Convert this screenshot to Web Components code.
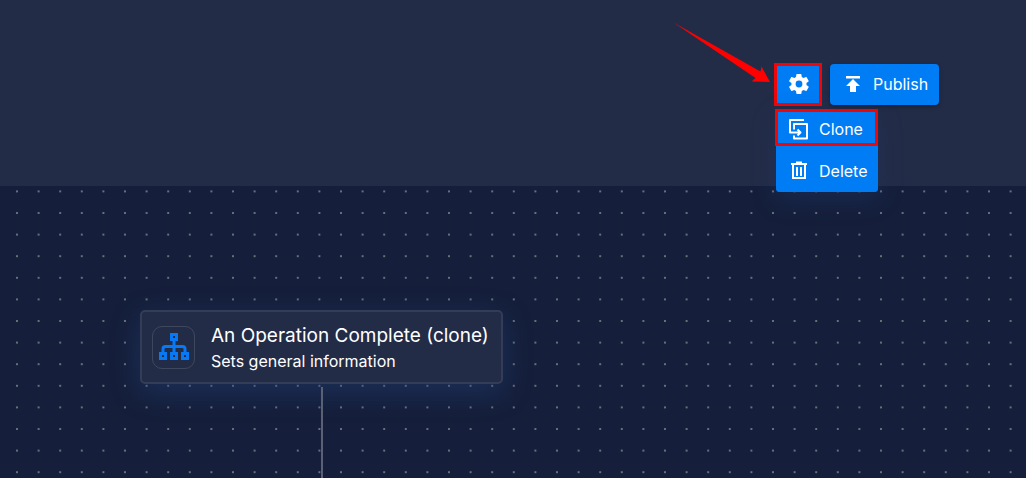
<!DOCTYPE html>
<html lang="en">
<head>
<meta charset="utf-8">
<title>Flow editor</title>
<style>
html, body { height: 100%; }
body { margin: 0; background: #151f3b; color: #fff; font-family: Inter, "Noto Sans", sans-serif; font-size: 16px; }
flow-editor { height: 100%; }
</style>
</head>
<body>
<flow-editor></flow-editor>

<template id="flow-editor-t">
<style>
:host { display: flex; flex-direction: column; min-height: 100%; overflow: hidden; }
header { display: flex; justify-content: flex-end; align-items: flex-start; gap: 8px; box-sizing: border-box; min-height: 186px; padding: 64px 87px 0 16px; background: #232c47; position: relative; z-index: 1; }
main { flex: 1; display: flex; }
flow-canvas { flex: 1; }
</style>
<header>
<settings-menu>
<action-button slot="items" name="Clone" kind="item" marked><app-icon name="clone"></app-icon></action-button>
<action-button slot="items" name="Delete" kind="item"><app-icon name="delete"></app-icon></action-button>
</settings-menu>
<action-button name="Publish" kind="main"><app-icon name="publish"></app-icon></action-button>
</header>
<main>
<flow-canvas>
<flow-node>
<app-icon slot="icon" name="tree"></app-icon>
<span slot="title">An Operation Complete (clone)</span>
<span slot="text">Sets general information</span>
</flow-node>
</flow-canvas>
</main>
</template>

<template id="settings-menu-t">
<style>
:host { display: block; position: relative; }
.menu { position: absolute; top: 45px; left: 0; width: 102px; display: flex; flex-direction: column; gap: 1px; border-radius: 4px; background: #007cf5; box-shadow: 0 8px 24px #1d3d7855; }
.arrow { position: absolute; right: 52px; top: -44px; width: 100px; height: 64px; pointer-events: none; }
</style>
<action-button label="Settings" kind="square" marked><app-icon name="gear"></app-icon></action-button>
<div class="menu"><slot name="items"></slot></div>
<svg class="arrow" viewBox="0 0 100 64" aria-hidden="true"><path fill="#f00" d="M3.5 2.5 90.5 51.5 91.5 46.5 100 62 81.5 61.5 85.5 58Z"/></svg>
</template>

<template id="action-button-t">
<style>
:host { display: block; position: relative; }
button { display: flex; align-items: center; gap: 9px; box-sizing: border-box; width: 100%; height: 41px; margin: 0; padding: 0 12px 2px; border: 0; border-radius: 4px; background: #007cf5; color: #fff; font: inherit; white-space: nowrap; cursor: pointer; }
:host([kind="main"]) button { width: 109px; box-shadow: 0 2px 4px #0004; }
:host([kind="square"]) button { width: 46px; padding: 0 11px 2px; }
button:hover { background: #0a86ff; }
:host([marked])::after { content: ""; position: absolute; inset: -1px 0 -1px -2px; border: 3px solid #f00606; pointer-events: none; }
:host([marked][kind="item"])::after { inset: 0 0 4px -1px; }
</style>
<button type="button"><slot></slot></button>
</template>

<template id="flow-canvas-t">
<style>
:host { display: block; position: relative; background: #151f3b; }
.dots { position: absolute; inset: 0; width: 100%; height: 100%; }
.node { position: absolute; left: 140px; top: 124px; width: 363px; height: calc(100% - 124px); display: flex; flex-direction: column; align-items: center; gap: 3px; }
slot { display: block; width: 100%; }
.line { flex: 1; width: 2px; background: #5b6175; }
</style>
<svg class="dots" aria-hidden="true"><defs><pattern id="d" x="6.2" y="-5.4" width="21.6" height="21.6" patternUnits="userSpaceOnUse"><circle cx="10.8" cy="10.8" r="1" fill="#858990"/></pattern></defs><rect width="100%" height="100%" fill="url(#d)"/></svg>
<div class="node"><slot></slot><div class="line"></div></div>
</template>

<template id="flow-node-t">
<style>
:host { display: flex; align-items: center; gap: 16px; box-sizing: border-box; height: 74px; padding: 0 10px; border: 2px solid #343d57; border-radius: 5px; background: #232c47; box-shadow: 0 8px 28px #25458070; }
.icon { display: flex; align-items: center; justify-content: center; box-sizing: border-box; width: 43px; height: 43px; border: 1px solid #3f475f; border-radius: 10px; }
.words { display: flex; flex-direction: column; padding-top: 2px; white-space: nowrap; }
h2 { margin: 0; font-size: 19px; line-height: 26px; font-weight: 400; }
p { margin: 0; font-size: 16px; line-height: 24px; }
</style>
<div class="icon"><slot name="icon"></slot></div>
<div class="words"><h2><slot name="title"></slot></h2><p><slot name="text"></slot></p></div>
</template>

<script>
const icons = {
  gear: [24, '0 0 24 24', '<path fill="#fff" d="M19.4 13c.1-.3.1-.6.1-1s0-.7-.1-1l2.100-1.600c.2-.2.3-.4.1-.7l-2-3.400c-.1-.2-.4-.3-.6-.2l-2.500 1a7 7 0 0 0-1.700-1l-.4-2.600c0-.3-.2-.5-.5-.5h-4c-.3 0-.5.2-.5.4L9 5.100a8 8 0 0 0-1.700 1l-2.500-1c-.2-.1-.5 0-.6.2l-2 3.500c-.1.2-.1.5.1.6L4.500 11c0 .3-.1.6-.1 1s0 .7.1 1l-2.200 1.600c-.2.2-.2.400-.1.600l2 3.500c.1.200.4.300.6.200l2.500-1c.5.400 1.100.8 1.700 1l.4 2.700c0 .2.200.4.500.4h4c.3 0 .5-.2.5-.4l.4-2.700a8 8 0 0 0 1.700-1l2.500 1c.2.1.5 0 .6-.2l2-3.500c.1-.2.1-.5-.1-.6ZM12 15.400a3.400 3.400 0 1 1 0-6.800 3.400 3.400 0 0 1 0 6.800Z"/>'],
  publish: [22, '0 0 22 22', '<path fill="#fff" d="M4 3h14v2.500H4ZM11 6l7 7h-4v6H8v-6H4Z"/>'],
  clone: [22, '0 0 22 22', '<path fill="none" stroke="#fff" stroke-width="2" stroke-linejoin="round" d="M16 2H2v12.500h10M9.500 11.500l3 3-3 3M6 11.500V6h13v14.500H6V17.500"/>'],
  delete: [22, '0 0 22 22', '<path fill="none" stroke="#fff" stroke-width="2" d="M3 4h16M8 2.500h6M5 4v14h12V4M9 7v9M13 7v9"/>'],
  tree: [32, '0 0 32 32', '<g fill="none" stroke="#0879f5" stroke-width="3"><path d="M13.500 3.500h5v5h-5ZM2.500 22.500h5v5h-5ZM13.500 22.500h5v5h-5ZM24.500 22.500h5v5h-5Z"/><path d="M16 9v13M5 22v-4q0-2.500 2.500-2.500h17q2.500 0 2.500 2.500v4"/></g>']
};

function define(name, setup) {
  customElements.define(name, class extends HTMLElement {
    connectedCallback() {
      if (this.shadowRoot) return;
      const root = this.attachShadow({ mode: 'open' });
      const template = document.getElementById(name + '-t');
      if (template) root.append(template.content.cloneNode(true));
      if (setup) setup(this, root);
    }
  });
}

define('app-icon', (el, root) => {
  const [size, box, shape] = icons[el.getAttribute('name')];
  root.innerHTML = `<style>:host{display:block;flex:none}svg{display:block}</style><svg width="${size}" height="${size}" viewBox="${box}" aria-hidden="true">${shape}</svg>`;
});
define('action-button', (el, root) => {
  const button = root.querySelector('button');
  if (el.hasAttribute('label')) button.setAttribute('aria-label', el.getAttribute('label'));
  if (el.hasAttribute('name')) button.append(el.getAttribute('name'));
});
define('flow-node');
define('flow-canvas');
define('settings-menu');
define('flow-editor');
</script>
</body>
</html>
